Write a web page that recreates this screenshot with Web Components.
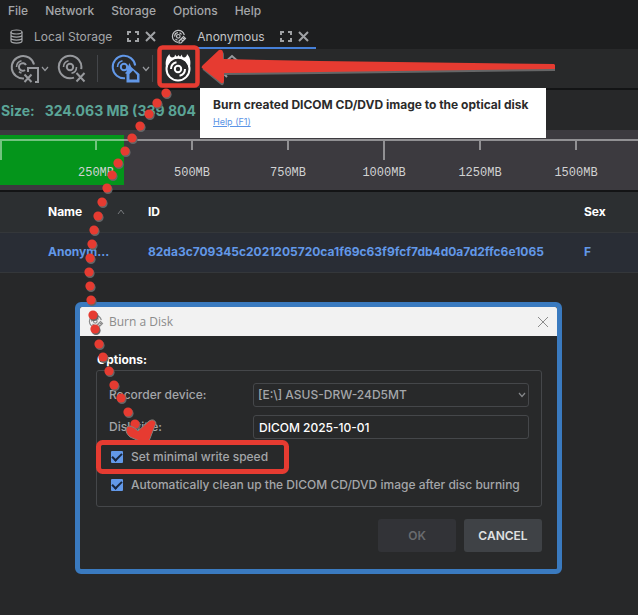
<!DOCTYPE html>
<html lang="en">
<head>
<meta charset="utf-8">
<title>Burn a Disk</title>
<style>
html, body { margin: 0; min-height: 100%; background: #272829; }
body { font: 12px/16px Inter, "Liberation Sans", sans-serif; color: #a4a6a9; overflow: hidden; }
</style>
</head>
<body>
<app-window></app-window>
<script>
const define = (name, html) => {
  const t = document.createElement('template');
  t.innerHTML = '<style>*{box-sizing:border-box}:host{display:block}button{font:inherit;color:inherit;background:none;border:0;padding:0;margin:0}svg{display:block;fill:none;stroke:currentColor}</style>' + html;
  customElements.define(name, class extends HTMLElement {
    constructor() {
      super();
      this.attachShadow({ mode: 'open' }).append(t.content.cloneNode(true));
    }
  });
};

const disc = (extra = '') => `
  <circle cx="13" cy="13" r="3.2" stroke-width="2"/>
  <path d="M6.500 13a6.5 6.5 0 0 1 5-6.3M19.500 13a6.5 6.5 0 0 1-5 6.3" stroke-width="1.6"/>${extra}`;

const smallDisc = `<svg width="16" height="16" viewBox="0 0 16 16" stroke-width="1.2">
  <path d="M7 13.3A6 6 0 1 1 13.3 6.2"/><circle cx="7.3" cy="7.3" r="1.8"/>
  <path d="M3.8 7.6a3.6 3.6 0 0 1 3.2-3.9M10.5 5.5a3.6 3.6 0 0 0-2-1.6M4.5 9.8a3.6 3.6 0 0 0 2 1.2"/>
  <path d="m8 12 4.5-4.5 2 2L10 14H8zM10 10l2 2M11.5 8.5l2 2"/></svg>`;

define('menu-bar', `
<style>nav{display:flex;gap:17px;padding:3px 8px;font-weight:500}button{line-height:16px}</style>
<nav><button>File</button><button>Network</button><button>Storage</button><button>Options</button><button>Help</button></nav>`);

define('view-tab', `
<style>
:host{display:flex;align-items:center;height:27px;padding:2px 7px 0 8px}
:host([active]){color:#c4c5c7}
.name{display:flex;align-items:center;gap:10px}
.tools{display:flex;gap:6px;margin-left:15px;color:#a0a2a5}
</style>
<button class="name"><slot name="icon"></slot><slot></slot></button>
<span class="tools">
<button aria-label="Expand"><svg width="12" height="11" viewBox="0 0 12 11" stroke-width="2"><path d="M1 4V1h3M8 1h3v3M11 7v3H8M4 10H1V7"/></svg></button>
<button aria-label="Close"><svg width="11" height="11" viewBox="0 0 11 11" stroke-width="2"><path d="m1 1 9 9M10 1l-9 9"/></svg></button>
</span>`);

define('tab-strip', `
<style>
nav{display:flex;height:27px;padding-left:1px}
.on{display:flex;position:relative}
.on::after{content:"";position:absolute;left:32px;right:0;bottom:0;height:2px;background:#4680d8}
</style>
<nav>
<view-tab><svg slot="icon" width="15" height="15" viewBox="0 0 15 15" stroke-width="1.2"><ellipse cx="7.5" cy="3" rx="5.5" ry="2"/><path d="M2 3v9c0 2.7 11 2.7 11 0V3M2 6c0 2.7 11 2.7 11 0M2 9c0 2.7 11 2.7 11 0"/></svg>Local Storage</view-tab>
<span class="on"><view-tab active><span slot="icon">${smallDisc}</span>Anonymous</view-tab></span>
</nav>`);

const chevron = '<svg width="8" height="6" viewBox="0 0 8 6" stroke-width="1.2"><path d="m1 1 3 3.5L7 1"/></svg>';

define('tool-bar', `
<style>
:host{background:#28292a;border-bottom:2px solid #131415}
div{display:flex;align-items:center;height:39px;padding-left:10px;color:#97999d}
i{width:1px;height:27px;background:#44464a}
.blue{color:#6298e8}.burn{color:#fff}
</style>
<div role="toolbar">
<button aria-label="Disc image options"><svg width="30" height="30" viewBox="0 0 30 30"><path d="M14 24.5a11.3 11.3 0 1 1 10-14" stroke-width="2"/><path d="M16 11a3.8 3.8 0 1 0-1 5" stroke-width="2"/><path d="M6.500 13a6.5 6.5 0 0 1 5-6.3M11.500 19a6 6 0 0 1-2.5-1.400" stroke-width="1.6"/><path d="M18 18v-4h10v14h-3M14.500 20.500l7 7.500M21.500 20.500l-7 7.500" stroke-width="2"/></svg></button>
<button aria-label="More" style="margin:0 8px 0 1px">${chevron}</button>
<button aria-label="Delete disc image"><svg width="30" height="30" viewBox="0 0 30 30">${disc('<path d="M17 23.6a11.3 11.3 0 1 1 7.2-8.5" stroke-width="2"/><path d="m19.500 19 8 8.500M27.500 19l-8 8.500" stroke-width="2"/>')}</svg></button>
<i style="margin:0 13px 0 10px"></i>
<button class="blue" aria-label="Save disc"><svg width="30" height="30" viewBox="0 0 30 30">${disc('<path d="M14 24.3a11.3 11.3 0 1 1 10.200-12.8" stroke-width="2"/><path d="M15.500 28.500V16l3-7q1 4 4 6l6 5v8.500z" fill="currentColor" stroke="none"/><path d="M18.500 25.500V20l3.500-3.500 4 4.500v4.500z" fill="#28292a" stroke="none"/>')}</svg></button>
<button aria-label="More" style="margin:0 2px 0 1px">${chevron}</button>
<i style="margin-right:11px"></i>
<button class="burn" aria-label="Burn disc"><svg width="28" height="32" viewBox="0 0 28 32"><path d="M2 14C1 8 2.500 4 5.500 1c0 2 1 3.500 3 3.500S11 3 11 1.500L13 4l1.500-2L16 4l2-2.500c0 2 .5 3 2 3s3-1.500 3-3.500c3 3 4 7 3 13z" fill="currentColor" stroke="none"/><circle cx="14" cy="16" r="10.500" fill="#28292a" stroke="none"/><circle cx="14" cy="16" r="11.500" stroke-width="2"/><g stroke-width="2"><circle cx="14" cy="16" r="3.200"/><path d="M7 16a7 7 0 0 1 5.500-6.800M21 16a7 7 0 0 1-5.500 6.800"/></g></svg></button>
<button aria-label="Export" style="margin-left:26px"><svg width="28" height="30" viewBox="0 0 28 30" stroke-width="2"><path d="m5 10 9-8 9 8M8 12l6-5 6 5M5 19l4 4"/></svg></button>
</div>`);

define('size-line', `
<style>:host{padding:12px 1px 10px;font-size:14px;font-weight:700;line-height:18px;color:#5ba597;white-space:nowrap}span{margin-left:10px}</style>
Size:<span>324.063 MB (339 804</span>`);

define('capacity-ruler', `
<style>
:host{background:#3c3a3f;padding:5px 0;border-bottom:2px solid #131415;overflow:hidden}
.band{height:50px;padding-top:4px;background:linear-gradient(#04951b,#04951b) 0 0/124px 100% no-repeat}
.scale{display:flex;border-top:2px solid #ffffff70}
.edge{flex:none;width:48px;border-left:2px solid #ffffff70;height:19px}
.mark{flex:none;width:96px;display:grid;grid-template-rows:22px 20px;justify-items:center;font:12px/20px "Liberation Mono",monospace;color:#d2d2d3}
.mark::before{content:"";width:2px;height:9px;background:#ffffff70}
.long::before{height:19px}
</style>
<div class="band"><div class="scale"><div class="edge"></div>
<div class="mark">250MB</div><div class="mark">500MB</div><div class="mark">750MB</div><div class="mark long">1000MB</div><div class="mark">1250MB</div><div class="mark">1500MB</div></div></div>`);

define('patient-table', `
<style>
table{width:100%;table-layout:fixed;border-collapse:collapse;font-size:12px;font-weight:700;text-align:left}
th,td{padding:0;font-weight:700;white-space:nowrap}
th:first-child,td:first-child{padding-left:48px;width:148px}
th:last-child,td:last-child{width:54px}
th{height:40px;background:#2c2f31;color:#fff}
td{height:40px;background:#292d35;color:#6298e8;border:solid #34373a;border-width:1px 0}
.sort{display:flex;align-items:center;justify-content:space-between;padding-right:23px}
.sort svg{stroke:#777a7d}
</style>
<table><thead><tr><th><span class="sort">Name <svg width="8" height="6" viewBox="0 0 8 6"><path d="m1 5 3-4 3 4"/></svg></span></th><th>ID</th><th>Sex</th></tr></thead>
<tbody><tr><td>Anonym...</td><td>82da3c709345c2021205720ca1f69c63f9fcf7db4d0a7d2ffc6e1065</td><td>F</td></tr></tbody></table>`);

define('burn-dialog', `
<style>
:host{border:5px solid #3a7abf;border-radius:6px;background:#28292a;font-weight:500}
header{display:flex;align-items:center;gap:5px;height:29px;padding:0 8px;background:#f2f2f2;color:#8b8b8b;border-radius:2px 2px 0 0;font-family:"Open Sans",sans-serif;font-weight:400}
header button{margin-left:auto}
form{padding:16px 15px 17px 16px}
h2{margin:0 0 2px;padding-left:1px;font-size:12px;line-height:16px;font-weight:700;color:#fff}
.box{border:1px solid #45474a;border-radius:3px;padding:12px 12px 11px}
.field{display:grid;grid-template-columns:144px 1fr;align-items:center;margin-bottom:8px}
.pick{display:grid;align-items:center}
.pick>*{grid-area:1/1}
.pick svg{justify-self:end;margin-right:3px;pointer-events:none;color:#86888b}
select,input[type=text]{appearance:none;width:100%;height:24px;border:1px solid #45474a;border-radius:3px;background:none;font:inherit;color:#a4a6a9;padding:0 4px;outline:0}
input[type=text]{color:#fff;padding:0 5px}
.check{display:flex;align-items:center;gap:8px;height:20px;padding-left:2px;margin-top:8px}
.check input{appearance:none;width:12px;height:12px;margin:0;border-radius:1px;background:#6298e8;display:grid;place-items:center}
.check input::before{content:"";width:8px;height:4px;border:solid #17253c;border-width:0 0 2px 2px;rotate:-45deg;margin-bottom:3px}
footer{display:flex;justify-content:flex-end;gap:8px;margin-top:12px}
footer button{width:78px;height:33px;border-radius:3px;background:#3f4246;color:#dfe0e1;font-weight:600}
footer button:disabled{background:#323337;color:#696b6e}
</style>
<header>${smallDisc}<span>Burn a Disk</span><button aria-label="Close"><svg width="12" height="12" viewBox="0 0 12 12"><path d="m1 1 10 10M11 1 1 11"/></svg></button></header>
<form>
<h2>Options:</h2>
<div class="box">
<div class="field"><label for="dev">Recorder device:</label><span class="pick"><select id="dev"><option>[E:\\] ASUS-DRW-24D5MT</option></select>${chevron}</span></div>
<div class="field"><label for="ttl">Disk title:</label><input id="ttl" type="text" value="DICOM 2025-10-01"></div>
<label class="check"><input type="checkbox" checked>Set minimal write speed</label>
<label class="check"><input type="checkbox" checked>Automatically clean up the DICOM CD/DVD image after disc burning</label>
</div>
<footer><button type="button" disabled>OK</button><button type="button">CANCEL</button></footer>
</form>`);

define('hint-tip', `
<style>:host{background:#fff;padding:9px 13px 8px;color:#2b2b2b;font-size:12px;font-weight:700;white-space:nowrap}
a{display:block;width:max-content;font-size:9px;line-height:16px;font-weight:400;color:#5b94e6;margin-top:1px}p{margin:0}</style>
<p><slot></slot></p><a href="#help">Help (F1)</a>`);

const trail = [[166,93],[157,103],[149,114],[140,126],[132,138],[125,151],[118,163],[112,175],[107,188],[102,202],[98,216],[94,230],[92,244],[90,258],[89,272],[90,286],[91,300],[93,315],[95,329],[99,344],[103,357],[109,371],[114,385],[121,398],[128,412],[135,424]];

define('guide-marks', `
<style>:host{pointer-events:none}</style>
<svg width="638" height="615" viewBox="0 0 638 615" aria-hidden="true">
<g fill="#656667" stroke="none">${trail.map(([x, y]) => `<circle cx="${x + 1}" cy="${y + 1.5}" r="4.600"/>`).join('')}
<path d="M204 67 220 52q4-1 4 3v6l97 2 234 3v5l-235 3-96 1v8q-1 4-4 1L203 70q-1-1 1-3z"/></g>
<g fill="#e63b31" stroke="none">${trail.map(([x, y]) => `<circle cx="${x}" cy="${y}" r="4.600"/>`).join('')}
<path d="M203 65 219 50q4-1 4 3v6l97 2 234 3 1 1v4l-235 3-96 1v8q-1 4-4 1L202 68q-1-1 1-3z"/></g>
<path d="M127 427q4-3 11 4l11-10q5-3 7 2l-7 18q-2 3-5 2l-14-6q-6-5-3-10z" fill="#e63b31" stroke="#85807a"/>
<path d="m127 427 10 6 14-11 4 1-6 17-5 1-14-6z" fill="#e63b31" stroke="none"/>
<rect x="159.500" y="47.500" width="38" height="38" rx="3" stroke="#e63b31" stroke-width="4.500"/>
<rect x="98.500" y="442.500" width="188" height="29" rx="4" stroke="#e63b31" stroke-width="5"/>
</svg>`);

define('app-window', `
<style>
:host{position:relative;min-height:100vh}
.top{background:#1d1e1f}
hint-tip{position:absolute;left:200px;top:88px;width:346px}
burn-dialog{position:absolute;left:75px;top:302px;width:487px}
guide-marks{position:absolute;left:0;top:0}
</style>
<div class="top"><menu-bar></menu-bar><tab-strip></tab-strip></div>
<tool-bar></tool-bar>
<size-line></size-line>
<capacity-ruler></capacity-ruler>
<patient-table></patient-table>
<burn-dialog></burn-dialog>
<hint-tip>Burn created DICOM CD/DVD image to the optical disk</hint-tip>
<guide-marks></guide-marks>`);
</script>
</body>
</html>
